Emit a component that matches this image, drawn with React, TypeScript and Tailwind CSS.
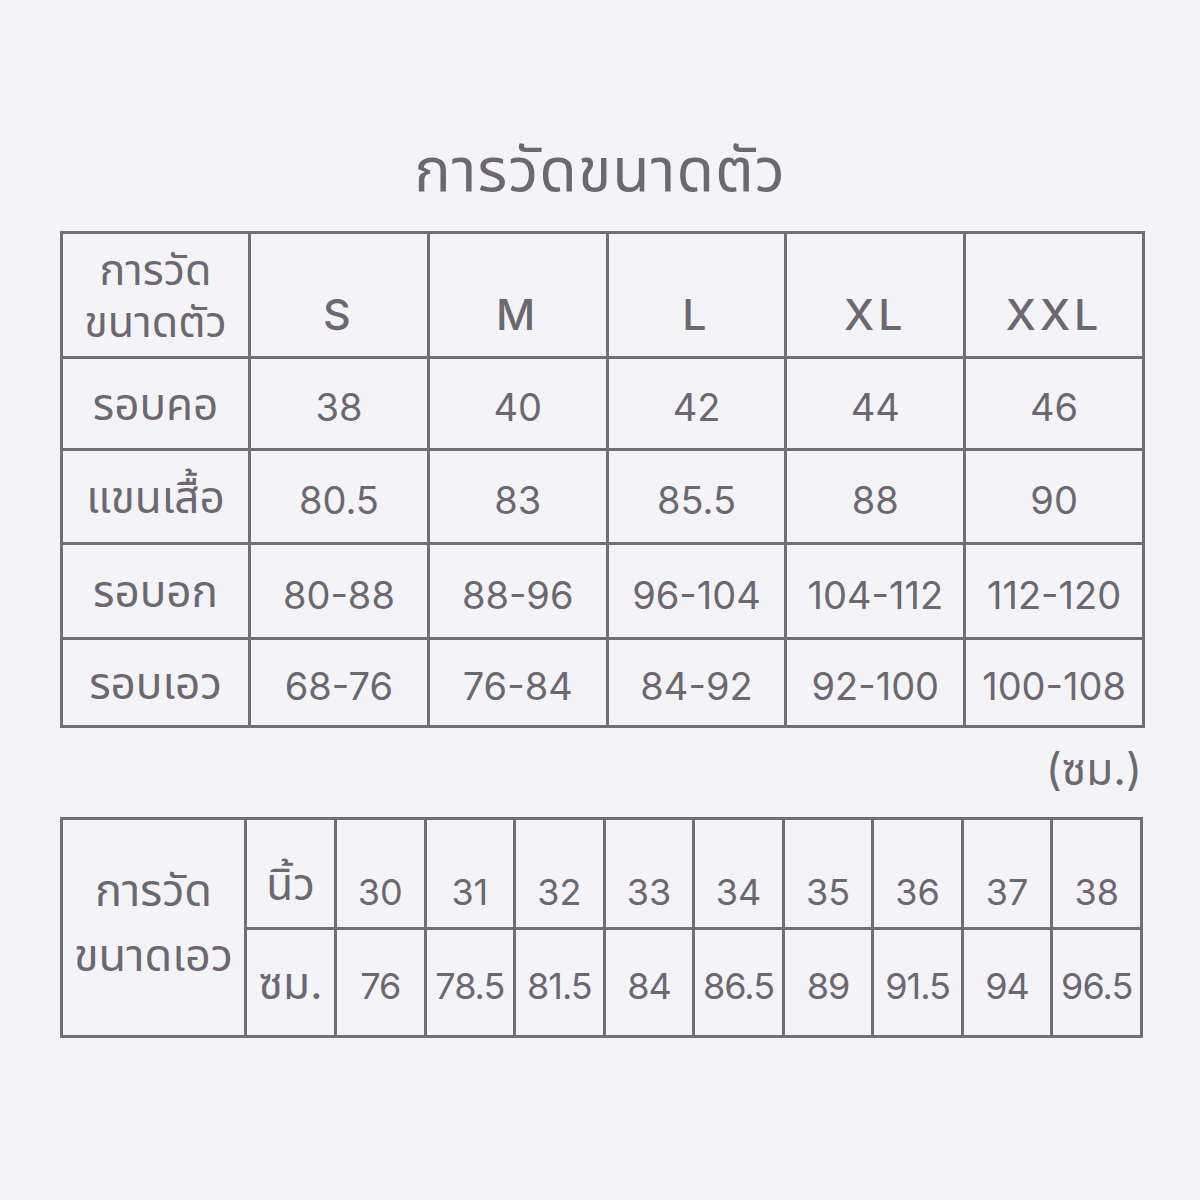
const sizes = ["S", "M", "L", "XL", "XXL"];

const rows = [
  { label: "รอบคอ", values: ["38", "40", "42", "44", "46"], h: "h-[92px]" },
  { label: "แขนเสื้อ", values: ["80.5", "83", "85.5", "88", "90"], h: "h-[94px]" },
  { label: "รอบอก", values: ["80-88", "88-96", "96-104", "104-112", "112-120"], h: "h-[95px]" },
  { label: "รอบเอว", values: ["68-76", "76-84", "84-92", "92-100", "100-108"], h: "h-[88px]" },
];

const inches = ["30", "31", "32", "33", "34", "35", "36", "37", "38"];
const cms = ["76", "78.5", "81.5", "84", "86.5", "89", "91.5", "94", "96.5"];

const cell = "border-[3px] border-[#736d77] text-center align-middle p-0";

export default function App() {
  return (
    <div
      className="w-[1200px] h-[1200px] bg-[#f4f4f8] text-[#6c6770] overflow-hidden"
      style={{ fontFamily: 'Inter, "Noto Sans Thai", "Noto Sans", "DejaVu Sans", sans-serif' }}
    >
      <h1 className="pt-[133px] text-center text-[61px] leading-[72px] font-normal tracking-[1px]">
        การวัดขนาดตัว
      </h1>

      <table className="ml-[60px] mt-[26px] w-[1085px] border-collapse table-fixed text-[38px]">
        <colgroup>
          <col className="w-[188px]" />
          <col />
          <col />
          <col />
          <col />
          <col />
        </colgroup>
        <tbody>
          <tr className="h-[125px]">
            <td className={`${cell} text-[43px] leading-[52px]`}>
              การวัด
              <br />
              ขนาดตัว
            </td>
            {sizes.map((s) => (
              <td key={s} className={`${cell} pt-[38px] text-[43px] font-medium tracking-[4px]`}>
                {s}
              </td>
            ))}
          </tr>
          {rows.map((r) => (
            <tr key={r.label} className={r.h}>
              <td className={`${cell} text-[44px]`}>{r.label}</td>
              {r.values.map((v, i) => (
                <td key={i} className={`${cell} pt-[8px]`}>
                  {v}
                </td>
              ))}
            </tr>
          ))}
        </tbody>
      </table>

      <div className="w-[1142px] text-right text-[44px] leading-[50px] mt-[16px]">(ซม.)</div>

      <table className="ml-[60px] mt-[23px] w-[1083px] border-collapse table-fixed text-[36px]">
        <colgroup>
          <col className="w-[184px]" />
          <col className="w-[90px]" />
          {inches.map((n) => (
            <col key={n} />
          ))}
        </colgroup>
        <tbody>
          <tr className="h-[110px]">
            <td rowSpan={2} className={`${cell} text-[45px] leading-[65px] pb-[12px]`}>
              การวัด
              <br />
              ขนาดเอว
            </td>
            <td className={`${cell} text-[44px] pt-[20px]`}>นิ้ว</td>
            {inches.map((n) => (
              <td key={n} className={`${cell} pt-[36px]`}>
                {n}
              </td>
            ))}
          </tr>
          <tr className="h-[108px]">
            <td className={`${cell} text-[44px]`}>ซม.</td>
            {cms.map((n) => (
              <td key={n} className={`${cell} pt-[6px] tracking-[-1px]`}>
                {n}
              </td>
            ))}
          </tr>
        </tbody>
      </table>
    </div>
  );
}
